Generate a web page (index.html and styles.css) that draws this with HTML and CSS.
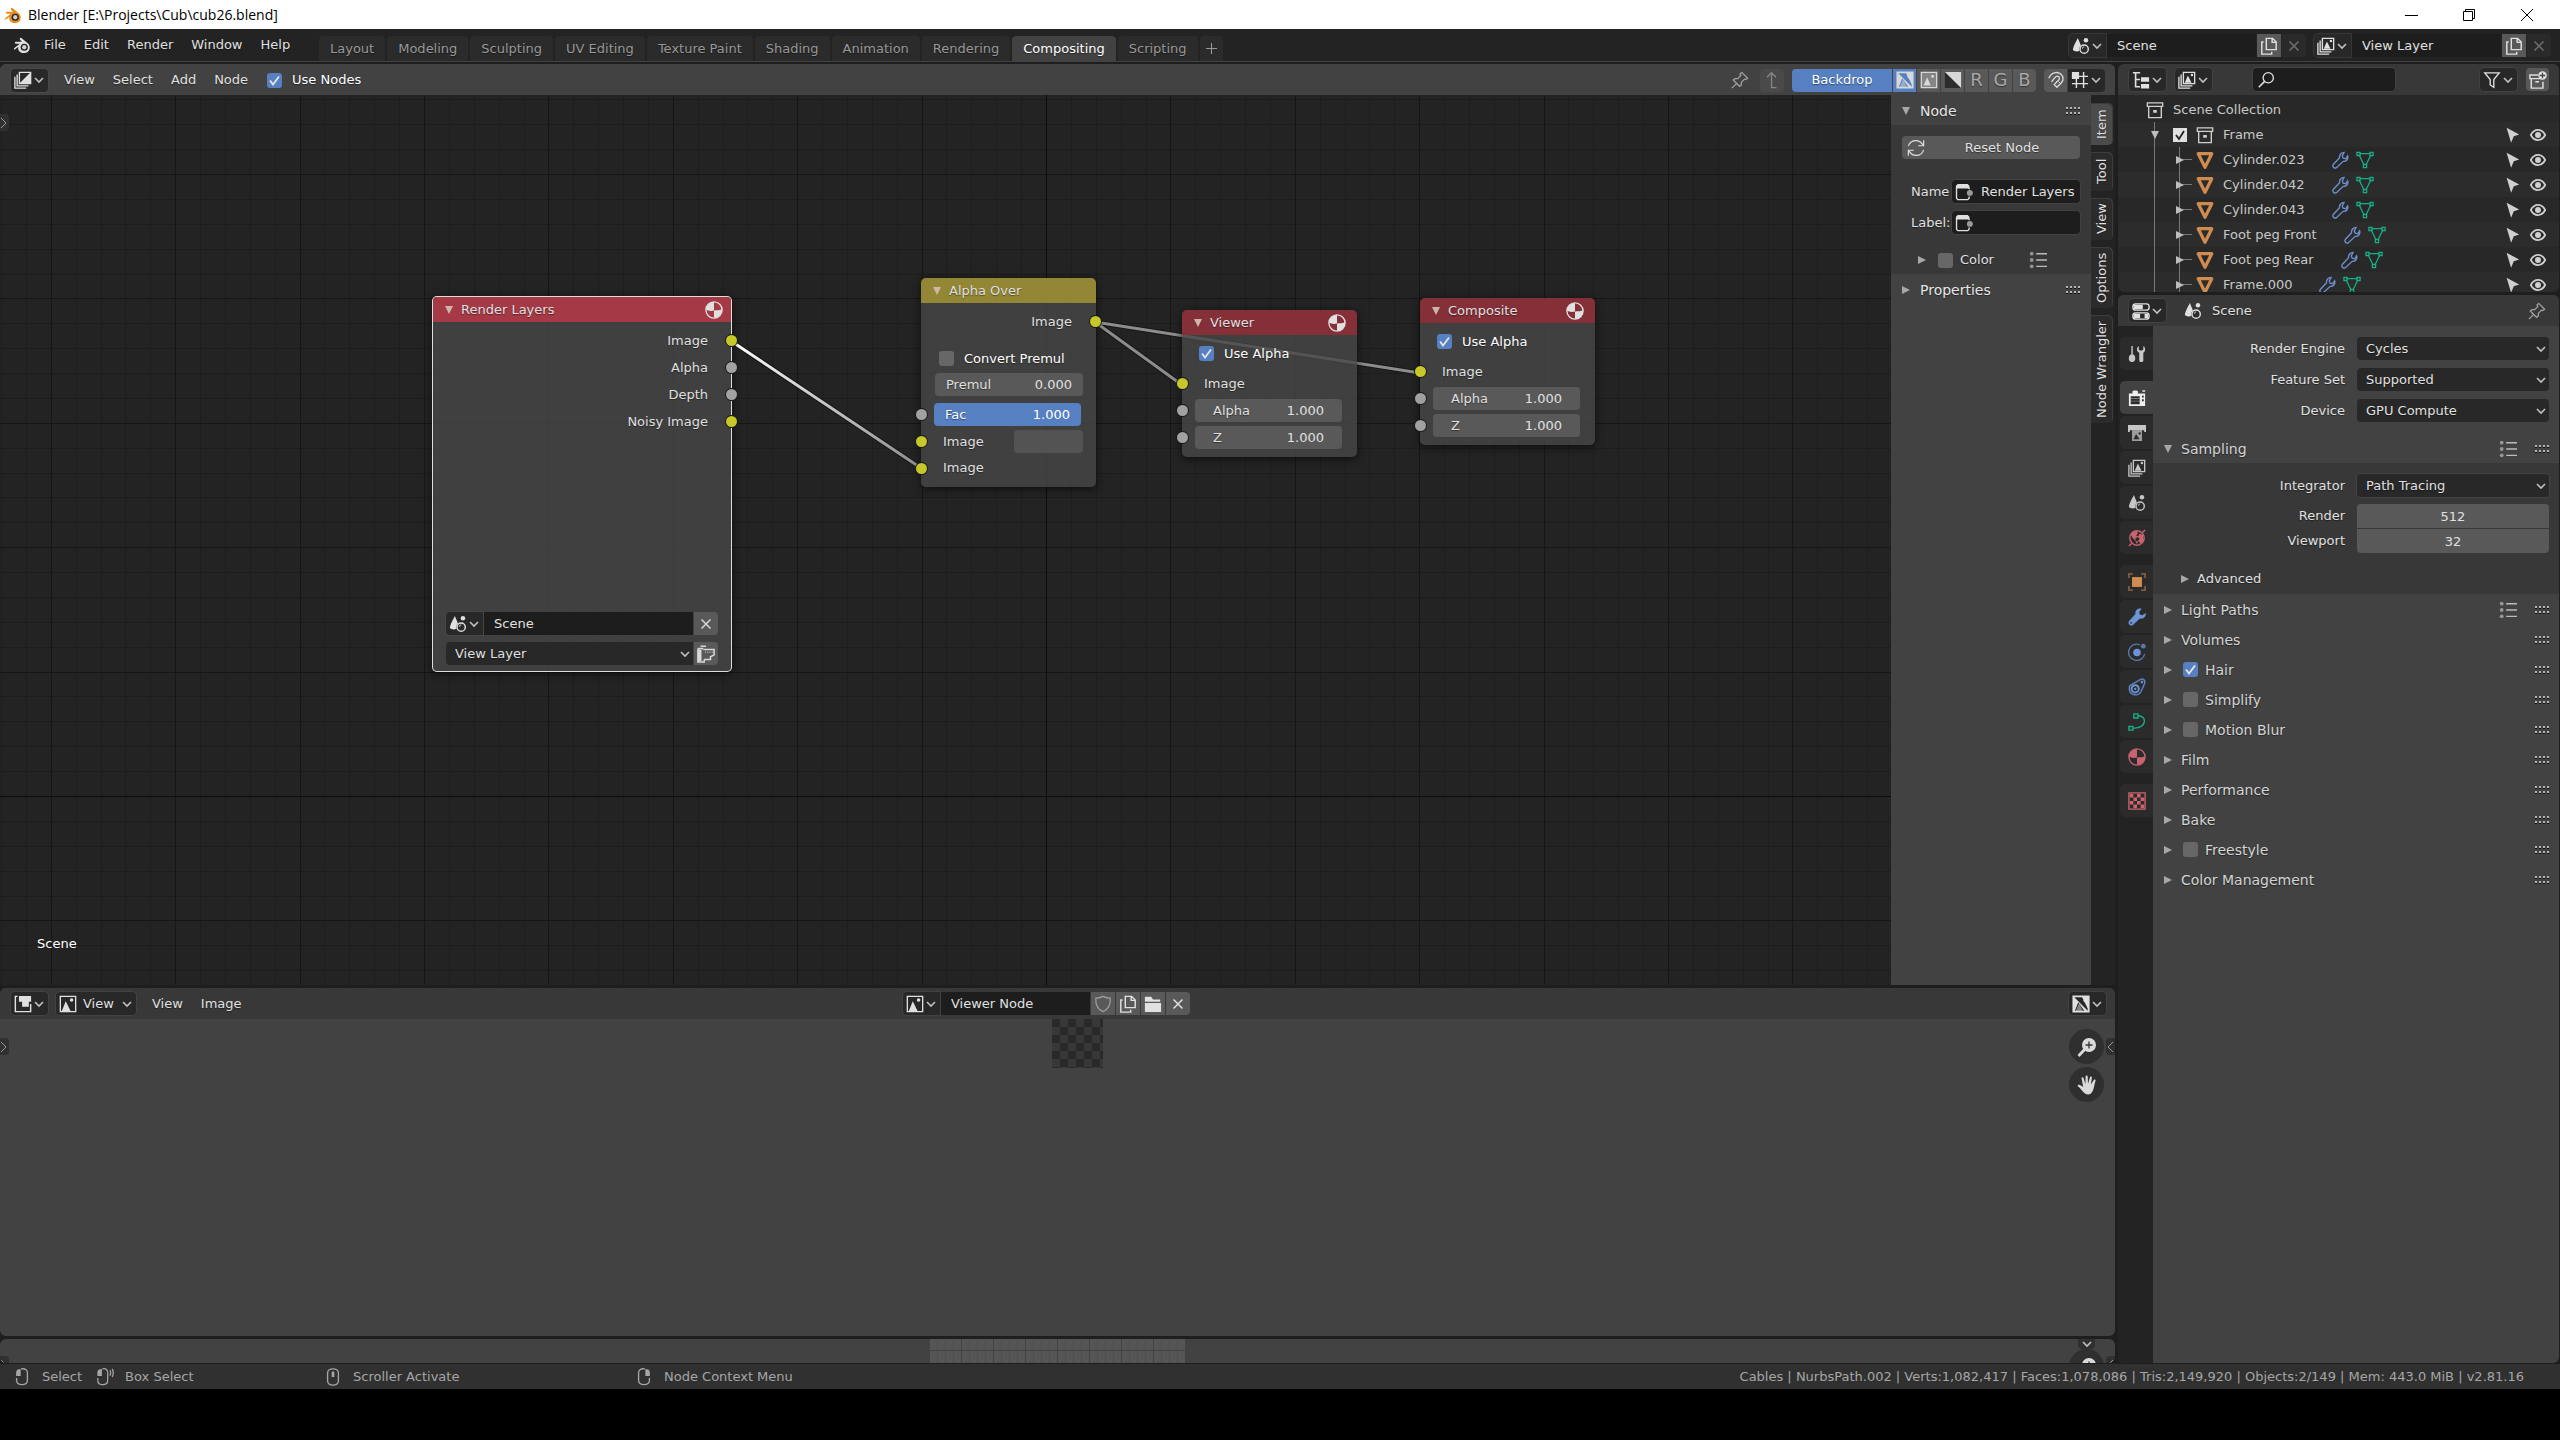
FILE: index.html
```html
<!DOCTYPE html>
<html lang="en">
<head>
<meta charset="utf-8">
<title>Blender [E:\Projects\Cub\cub26.blend]</title>
<link rel="stylesheet" href="styles.css">
</head>
<body>
<svg class="sprite" aria-hidden="true">
  <symbol id="chev" viewBox="0 0 10 10"><path d="M1 3l4 4 4-4" fill="none" stroke="currentColor" stroke-width="1.6"/></symbol>
  <symbol id="down" viewBox="0 0 10 10"><path d="M1 1h8L5 9z" fill="currentColor"/></symbol>
  <symbol id="right" viewBox="0 0 10 10"><path d="M1 1v8l8-4z" fill="currentColor"/></symbol>
  <symbol id="blender" viewBox="0 0 20 20"><path d="M9 2l8 6.500c3 3 2 10-4.500 10.500C7 19.200 5 15.500 6 12l-3.500 2.800c-1 .6-2-.4-1.300-1.200L7.500 8.500H3c-1.300 0-1.300-2 0-2h7L8 4.500C7 3 8 1.500 9 2z" fill="currentColor"/><circle cx="12.500" cy="12.500" r="4" class="hole"/><circle cx="12.500" cy="12.500" r="2.400" class="pupil"/></symbol>
  <symbol id="scene" viewBox="0 0 20 20"><path d="M6.500 1c2 5 4 9 4.500 12-2 3.500-8 4-10 1.500C1 11 4.500 5 6.500 1z" fill="currentColor"/><circle cx="15.500" cy="3.500" r="2.500" fill="currentColor"/><circle cx="13.500" cy="13.500" r="5.500" class="cut"/><circle cx="13.500" cy="13.500" r="4.600" fill="none" stroke="currentColor" stroke-width="1.600"/><path d="M11.500 13a2 2 0 0 1 2-2" fill="none" stroke="currentColor"/></symbol>
  <symbol id="layers" viewBox="0 0 20 20"><path d="M6 1.500h12.500v12.500H6zM3.500 4v12.500H16M1 6.500V19h12.500" fill="none" stroke="currentColor" stroke-width="1.500"/><path d="M7.500 13l3.500-8 4 8z" fill="currentColor"/><circle cx="15.500" cy="4.500" r="1.400" fill="currentColor"/></symbol>
  <symbol id="compositor" viewBox="0 0 20 20"><path d="M6 1.500h12.500v12.500H6zM3.500 4v12.500H16M1 6.500V19h12.500" fill="none" stroke="currentColor" stroke-width="1.500"/><path d="M6 14L18.500 1.500V14z" fill="currentColor"/></symbol>
  <symbol id="image" viewBox="0 0 20 20"><path d="M1.500 1.500h17v17h-17z" fill="none" stroke="currentColor" stroke-width="1.500"/><path d="M3 18l4.500-11L13 18z" fill="currentColor"/><circle cx="14" cy="5.500" r="2" fill="currentColor"/></symbol>
  <symbol id="imgalpha" viewBox="0 0 20 20"><path d="M1.500 1.500h17v17h-17z" fill="none" stroke="currentColor" stroke-width="2"/><path d="M2 2l16 16h-4L7 8 3 18H2zM11 2h8v16z" fill="currentColor"/><path d="M4 18l4-9 4 9z" fill="currentColor" opacity=".5"/><circle cx="14.500" cy="6" r="1.800" fill="currentColor"/></symbol>
  <symbol id="imgbox" viewBox="0 0 20 20"><path d="M1.500 1.500h17v17h-17z" fill="currentColor" opacity=".35"/><path d="M1.500 1.500h17v17h-17z" fill="none" stroke="currentColor" stroke-width="1.500"/><path d="M4 16l4-9 4 9z" fill="currentColor"/><circle cx="14" cy="6" r="1.600" fill="currentColor"/></symbol>
  <symbol id="diag" viewBox="0 0 20 20"><path d="M1 1h18v18H1z" class="dark"/><path d="M1 1h18v18z" fill="currentColor"/></symbol>
  <symbol id="magnet" viewBox="0 0 20 20"><path d="M2 8C5 1 11 1 14 2.500c5 3 4.500 8 2 10.500l-5 5-3-3 5-5c2-2 0-5-2.500-4S7 10 5 12" fill="none" stroke="currentColor" stroke-width="1.500"/><path d="M12.500 11.500l3 3" stroke="currentColor"/></symbol>
  <symbol id="grid" viewBox="0 0 20 20"><path d="M1 6h18M1 14h18M6 3v16M14 1v18" stroke="currentColor" stroke-width="1.600"/><path d="M1 1h8v8H1z" fill="currentColor"/></symbol>
  <symbol id="pin" viewBox="0 0 20 20"><path d="M12 1.500l6.500 6.500-2 1.500-1.500-.5-3.500 3.500v3l-2 1.500-7-7 2-1.500h3L11 5l-1-1.500zM6 14l-5 5" fill="none" stroke="currentColor" stroke-width="1.400"/></symbol>
  <symbol id="up" viewBox="0 0 20 20"><path d="M15 18.500H9.500V2M4.500 7l5-5 5 5" fill="none" stroke="currentColor" stroke-width="1.500"/></symbol>
  <symbol id="copy" viewBox="0 0 20 20"><path d="M7 1.500h7l4 4V14H7zM13.500 1.500V6H18M4 5.500H2V19h11v-2.500" fill="none" stroke="currentColor" stroke-width="1.600"/></symbol>
  <symbol id="x" viewBox="0 0 20 20"><path d="M5 5l10 10M15 5L5 15" stroke="currentColor" stroke-width="1.600"/></symbol>
  <symbol id="tree" viewBox="0 0 20 20"><path d="M1 2h8M4 2v15.500h5M4 9.500h5" fill="none" stroke="currentColor" stroke-width="1.800"/><path d="M10 7h9v5h-9zM10 14.500h9v5h-9z" fill="currentColor"/></symbol>
  <symbol id="search" viewBox="0 0 20 20"><circle cx="12.500" cy="7.500" r="5.700" fill="none" stroke="currentColor" stroke-width="1.500"/><path d="M8.500 11.500L2 18" stroke="currentColor" stroke-width="1.800"/></symbol>
  <symbol id="filter" viewBox="0 0 20 20"><path d="M2 2h16l-6 7.500V18l-4-2.500v-6z" fill="none" stroke="currentColor" stroke-width="1.500"/></symbol>
  <symbol id="newcoll" viewBox="0 0 20 20"><path d="M10 4.500H1v4h13M2.500 8.500V19h13v-7M7 12h4" fill="none" stroke="currentColor" stroke-width="1.600"/><circle cx="15" cy="5" r="4.700" fill="currentColor"/><path d="M15 2v6M12 5h6" stroke="#444" stroke-width="1.400"/></symbol>
  <symbol id="coll" viewBox="0 0 20 20"><path d="M1.500 2h17v4h-17zM3 6v12.500h14V6" fill="none" stroke="currentColor" stroke-width="1.500"/><path d="M8 10h4v3H8z" fill="currentColor"/></symbol>
  <symbol id="mesh" viewBox="0 0 20 20"><path d="M2.500 3h15L10 18z" fill="none" stroke="#cf8b50" stroke-width="3.600" stroke-linejoin="round"/></symbol>
  <symbol id="meshdata" viewBox="0 0 20 20"><path d="M4 3h12M3.500 4.500l5.500 11M16.500 4.500l-5.500 11" fill="none" stroke="#17b086" stroke-width="1.400"/><path d="M1 1.500h3.500V5H1zM15.500 1.500H19V5h-3.500zM8.200 15h3.600v3.600H8.200z" fill="none" stroke="#17b086" stroke-width="1.400"/></symbol>
  <symbol id="wrench" viewBox="0 0 20 20"><path d="M14.500 1.500l-2 4 1 2.500 3 .5 2-3c1 3.500-1.500 6.500-5 6l-7.500 7c-2 1.500-5-1-3.500-3.500l7-7.500C9 4.500 11.500 1.500 14.500 1.500z" fill="none" stroke="#6d8fcd" stroke-width="1.500"/></symbol>
  <symbol id="wrenchfill" viewBox="0 0 20 20"><path d="M15 .8l-2.600 3.900.8 2.600 2.600.8 3.900-2.600c.8 4-2.600 7.200-6.500 6.200L5.500 18.800c-2.800 2-6.500-1.500-4.300-4.300l7.100-7.700C7.300 3.200 10.800-.2 15 .8z" fill="#6b93d6"/><circle cx="3.500" cy="16.500" r="1" class="dark"/></symbol>
  <symbol id="cursor" viewBox="0 0 20 20"><path d="M4 2l14 7.500-6 2-3 7z" fill="currentColor"/></symbol>
  <symbol id="eye" viewBox="0 0 20 20"><path d="M2 10c4-7.500 12-7.500 16 0-4 7.500-12 7.500-16 0z" fill="none" stroke="currentColor" stroke-width="1.900"/><circle cx="10" cy="10" r="3.300" fill="currentColor"/></symbol>
  <symbol id="props" viewBox="0 0 20 20"><rect x="1" y="2" width="18" height="7" rx="3" fill="none" stroke="currentColor" stroke-width="1.500"/><path d="M2 3h10v5H2z" fill="currentColor"/><rect x="1" y="12" width="18" height="7" rx="3" fill="none" stroke="currentColor" stroke-width="1.500"/><path d="M2 13h7v5H2zM14 13h4v5h-4z" fill="currentColor"/></symbol>
  <symbol id="tool" viewBox="0 0 20 20"><path d="M4.500 1v10" stroke="currentColor" stroke-width="1.600"/><path d="M1.500 12l1.500-1.500h3L7.500 12c1.500 4 0 7-3 7s-4.500-3-3-7zM12 1v4l1.500 1h2L17 5V1c3 2 2.500 6 0 7.500v9c0 2-4.500 2-4.500 0v-9C9.500 7 9 3 12 1z" fill="currentColor"/></symbol>
  <symbol id="render" viewBox="0 0 20 20"><path d="M1 5h4V2.500C5 1.500 11 1.500 11 2.500V5h8v14H1z" fill="currentColor"/><path d="M3 8h10v9H3zM15.500 7.500h2v2h-2zM15.500 11.500h2v2h-2z" class="dark"/><path d="M3 10h10v1H3zM3 13h10v1H3z" fill="currentColor" opacity=".4"/><path d="M16 1.500h3V3h-3z" fill="currentColor"/></symbol>
  <symbol id="output" viewBox="0 0 20 20"><path d="M0 1h20v8h-2V7H2v2H0z" fill="currentColor"/><path d="M4.500 7h11v12h-11z" fill="currentColor" opacity=".75"/><path d="M6 17l3-6 4 6z" class="dark"/><circle cx="13" cy="10.500" r="1.300" class="dark"/></symbol>
  <symbol id="world" viewBox="0 0 20 20"><circle cx="10" cy="10" r="8" fill="none" stroke="#c9636d" stroke-width="1.600"/><path d="M1 19l3-3M16 4l3-3" stroke="#c9636d" stroke-width="1.600"/><path d="M4 4l6-2 1 3-2 2 3 2-4 1 1 3-3-2-3-5zM13 5l4 2v6l-3 3-3-3 2-2-2-2zM8 13l3 1-1 3z" fill="#c9636d"/></symbol>
  <symbol id="object" viewBox="0 0 20 20"><path d="M4.500 4.500h11v11h-11z" fill="#d18c52"/><path d="M1 5.500V1h4.500M14.500 1H19v4.500M19 14.500V19h-4.500M5.500 19H1v-4.500" fill="none" stroke="#a06a40" stroke-width="1.500"/></symbol>
  <symbol id="physics" viewBox="0 0 20 20"><circle cx="10" cy="10.500" r="4.200" fill="#6b93d6"/><path d="M13 2a9 9 0 1 0 5.500 10" fill="none" stroke="#5878ad" stroke-width="1.500"/><circle cx="17" cy="3.500" r="2.700" fill="#5878ad"/></symbol>
  <symbol id="constraint" viewBox="0 0 20 20"><path d="M2 8.500L14 1.500c3-1 5.500 1 4.500 4.500L14.500 15c-3 6-13 4.500-13-3 0-1.500 0-2.500.5-3.500z" fill="none" stroke="#5e84c2" stroke-width="1.600"/><circle cx="8" cy="12" r="4" fill="none" stroke="#6b93d6" stroke-width="2.200"/><circle cx="8" cy="12" r="1.300" fill="#6b93d6"/><circle cx="15.500" cy="4.500" r="1.500" fill="#6b93d6"/></symbol>
  <symbol id="curve" viewBox="0 0 20 20"><path d="M11 3c10 0 11 13-5 14" fill="none" stroke="#17b086" stroke-width="1.500"/><path d="M6.500 1H11v4.500H6.500zM1 15h4.500v4H1z" fill="none" stroke="#17b086" stroke-width="1.500"/></symbol>
  <symbol id="ball" viewBox="0 0 20 20"><circle cx="10" cy="10" r="9" fill="none" stroke="currentColor" stroke-width="1.500"/><path d="M10 1v9.500C7 11.500 3 11 1 9.500 1.500 5 5 1 10 1zM10 10.500c3.500 0 7 0 9-1.500 0 6-3.500 9.500-9 10z" fill="currentColor"/></symbol>
  <symbol id="texture" viewBox="0 0 20 20"><path d="M1 1h18v18H1z" fill="none" stroke="currentColor" stroke-width="1.500"/><path d="M2 2h4v4H2zM10 2h4v4h-4zM6 6h4v4H6zM14 6h4v4h-4zM2 10h4v4H2zM10 10h4v4h-4zM6 14h4v4H6zM14 14h4v4h-4z" fill="currentColor"/></symbol>
  <symbol id="list" viewBox="0 0 20 20"><path d="M8 3h12M8 10h12M8 17h12" stroke="currentColor" stroke-width="1.500"/><circle cx="3" cy="3" r="2.100" fill="currentColor" opacity=".7"/><circle cx="3" cy="10" r="2.100" fill="currentColor" opacity=".7"/><circle cx="3" cy="17" r="2.100" fill="currentColor" opacity=".7"/></symbol>
  <symbol id="grip" viewBox="0 0 14 8"><path d="M0 0h2v2H0zM4 0h2v2H4zM8 0h2v2H8zM12 0h2v2h-2zM0 5h2v2H0zM4 5h2v2H4zM8 5h2v2H8zM12 5h2v2h-2z" fill="#b5b5b5"/><path d="M0 2h2v1H0zM4 2h2v1H4zM8 2h2v1H8zM12 2h2v1h-2zM0 7h2v1H0zM4 7h2v1H4zM8 7h2v1H8zM12 7h2v1h-2z" fill="#111"/></symbol>
  <symbol id="refresh" viewBox="0 0 20 20"><path d="M1.500 8C4 0 14 0 17.500 6.500M18.500 12C16 20 6 20 2.500 13.500M18.500 1.500V7.500H12.500M1.500 18.500v-6h6" fill="none" stroke="currentColor" stroke-width="1.300"/></symbol>
  <symbol id="node" viewBox="0 0 20 20"><path d="M3 1h11l2 2v3H1V3z" fill="currentColor"/><path d="M1.700 5v12l1.500 1.500h11l1.500-1.500v-2M15.700 5v2" fill="none" stroke="currentColor" stroke-width="1.500"/><circle cx="16.500" cy="11" r="3.300" fill="#999"/></symbol>
  <symbol id="uvedit" viewBox="0 0 20 20"><path d="M4 1.500H1.500v17h17V10" fill="none" stroke="currentColor" stroke-width="1.600"/><path d="M5.500 1H19v6.500h-2.500V13H9V7.500H5.500z" fill="currentColor"/></symbol>
  <symbol id="shield" viewBox="0 0 20 20"><path d="M10 1.500c3 1.500 5 2 8 2C18.500 11 16 16 10 18.500 4 16 1.500 11 2 3.500c3 0 5-.5 8-2z" fill="none" stroke="currentColor" stroke-width="1.400"/></symbol>
  <symbol id="folder" viewBox="0 0 20 20"><path d="M1 2h7l2 3h8v2.500H1zM1 9h18v10H1z" fill="currentColor"/></symbol>
  <symbol id="renderlayer" viewBox="0 0 20 20"><path d="M1 4v15h7v-3M1 4h6M4 1.500h6M7 5h12v6l-4 2v3H8" fill="none" stroke="currentColor" stroke-width="1.700"/><path d="M1 5h4v13H1z" fill="currentColor"/><path d="M9 8h9" stroke="currentColor" stroke-dasharray="1 1"/></symbol>
  <symbol id="zoomin" viewBox="0 0 20 20"><circle cx="12" cy="8" r="7" fill="currentColor"/><path d="M8 12l-6.500 7" stroke="currentColor" stroke-width="2.800"/><path d="M12 4.500v7M8.500 8h7" stroke="#333" stroke-width="1.300"/></symbol>
  <symbol id="hand" viewBox="0 0 20 20"><path d="M8 18.500C5 16.500 3.500 13 .8 11.200c-.6-1.200 1-1.900 2.200-1.200L6.200 12 4.600 3.600c-.2-1.500 1.600-1.700 2-.3L8.400 9 8.600 1.500c.1-1.300 2-1.300 2.100 0l.3 7.300L13 2.200c.4-1.300 2-.9 1.900.4L13.900 9.600 16.800 5c.8-1 2.200-.2 1.700 1-1.500 4-1.200 9-4.500 12.500-1.500 1.300-4.500 1.200-6 0z" fill="currentColor"/></symbol>
  <symbol id="mouseL" viewBox="0 0 20 20"><path d="M9 1c5-1 7 2 7 4v9c0 6-12 6-12 0v-3" fill="none" stroke="currentColor" stroke-width="1.500"/><path d="M3.500 9V5c0-3 2-4 5-4v8z" fill="currentColor"/></symbol>
  <symbol id="mouseD" viewBox="0 0 20 20"><path d="M7 1c5-1 6 2 6 4v9c0 6-11 6-11 0v-3M15.500 2.500c1 2 1 4 0 6M18 1c1.500 3 1.500 6 0 9" fill="none" stroke="currentColor" stroke-width="1.400"/><path d="M1.500 9V5c0-3 2-4 5-4v8z" fill="currentColor"/></symbol>
  <symbol id="mouseM" viewBox="0 0 20 20"><path d="M4 5.500c0-6 12-6 12 0v9c0 6-12 6-12 0z" fill="none" stroke="currentColor" stroke-width="1.500"/><path d="M8.500 4h3v6h-3z" fill="currentColor"/></symbol>
  <symbol id="mouseR" viewBox="0 0 20 20"><path d="M11 1C6 0 4 3 4 5v9c0 6 12 6 12 0v-3" fill="none" stroke="currentColor" stroke-width="1.500"/><path d="M16.500 9V5c0-3-2-4-5-4v8z" fill="currentColor"/></symbol>
</svg>

<header class="titlebar">
  <svg class="ic logo"><use href="#blender"/></svg>
  <span class="caption">Blender [E:\Projects\Cub\cub26.blend]</span>
  <button class="win" aria-label="Minimize"><svg viewBox="0 0 16 16"><path d="M2 8.500h13"/></svg></button>
  <button class="win" aria-label="Restore"><svg viewBox="0 0 16 16"><path d="M2.500 4.500h9v9h-9zM4.500 4.500v-2h9v9h-2"/></svg></button>
  <button class="win" aria-label="Close"><svg viewBox="0 0 16 16"><path d="M2 2l12 12M14 2L2 14"/></svg></button>
</header>

<nav class="menubar">
  <button class="app" aria-label="Blender"><svg class="ic"><use href="#blender"/></svg></button>
  <div class="menus"><button>File</button><button>Edit</button><button>Render</button><button>Window</button><button>Help</button></div>
  <div class="workspaces">
    <button>Layout</button><button>Modeling</button><button>Sculpting</button><button>UV Editing</button><button>Texture Paint</button><button>Shading</button><button>Animation</button><button>Rendering</button><button class="on">Compositing</button><button>Scripting</button><button class="plus" aria-label="Add workspace"><svg viewBox="0 0 10 10"><path d="M5 0v10M0 5h10"/></svg></button>
  </div>
  <div class="ids">
    <div class="idbox"><button class="pick" aria-label="Browse scene"><svg class="ic"><use href="#scene"/></svg><svg class="ch"><use href="#chev"/></svg></button><input aria-label="Scene" value="Scene"><button class="sq" aria-label="New scene"><svg class="ic"><use href="#copy"/></svg></button><button class="sq off" aria-label="Delete scene"><svg class="ic"><use href="#x"/></svg></button></div>
    <div class="idbox"><button class="pick" aria-label="Browse view layer"><svg class="ic"><use href="#layers"/></svg><svg class="ch"><use href="#chev"/></svg></button><input aria-label="View layer" value="View Layer"><button class="sq" aria-label="New view layer"><svg class="ic"><use href="#copy"/></svg></button><button class="sq off" aria-label="Delete view layer"><svg class="ic"><use href="#x"/></svg></button></div>
  </div>
</nav>

<main>
  <div class="left">
    <section class="area nodes">
      <header class="bar light">
        <button class="pick" aria-label="Editor type"><svg class="ic"><use href="#compositor"/></svg><svg class="ch"><use href="#chev"/></svg></button>
        <div class="menus"><button>View</button><button>Select</button><button>Add</button><button>Node</button></div>
        <label class="check usenodes"><input type="checkbox" checked>Use Nodes</label>
        <div class="tools">
          <button class="bare dim" aria-label="Pin"><svg class="ic"><use href="#pin"/></svg></button>
          <button class="sq parent" aria-label="Parent"><svg class="ic"><use href="#up"/></svg></button>
          <div class="seg"><button class="backdrop">Backdrop</button><button class="sq blue" aria-label="Color and alpha"><svg class="ic"><use href="#imgalpha"/></svg></button><button class="sq" aria-label="Color"><svg class="ic"><use href="#imgbox"/></svg></button><button class="sq" aria-label="Alpha"><svg class="ic"><use href="#diag"/></svg></button><button class="sq chan">R</button><button class="sq chan">G</button><button class="sq chan">B</button></div>
          <div class="seg"><button class="sq" aria-label="Snap"><svg class="ic"><use href="#magnet"/></svg></button><button class="pick flat" aria-label="Snap to"><svg class="ic"><use href="#grid"/></svg><svg class="ch"><use href="#chev"/></svg></button></div>
        </div>
      </header>
      <div class="editor">
        <div class="canvas">
          <svg class="lines" id="lines"></svg>
          <svg class="links">
            <defs><linearGradient id="lg" gradientUnits="userSpaceOnUse" x1="731" y1="246" x2="921" y2="373"><stop offset="0" stop-color="#fff"/><stop offset="1" stop-color="#8c8c8c"/></linearGradient></defs>
            <g class="shade"><path d="M731 246L921 373M1095 227L1182 290M1095 227L1420 278"/></g>
            <path d="M731 246L921 373" stroke="url(#lg)"/><path class="grey" d="M1095 227L1182 290M1095 227L1420 278"/>
          </svg>

          <article class="node big" style="left:432px;top:201px">
            <h3 class="red hot"><svg class="tri"><use href="#down"/></svg>Render Layers<svg class="ic"><use href="#ball"/></svg></h3>
            <div class="sock out">Image<i class="y"></i></div>
            <div class="sock out">Alpha<i></i></div>
            <div class="sock out">Depth<i></i></div>
            <div class="sock out">Noisy Image<i class="y"></i></div>
            <div class="foot">
              <div class="seg"><button class="pick" aria-label="Browse scene"><svg class="ic"><use href="#scene"/></svg><svg class="ch"><use href="#chev"/></svg></button><input class="grow" aria-label="Node scene" value="Scene"><button class="sq" aria-label="Unlink"><svg class="ic"><use href="#x"/></svg></button></div>
              <div class="seg"><span class="drop grow"><select aria-label="Node view layer"><option>View Layer</option></select><svg class="ch"><use href="#chev"/></svg></span><button class="sq" aria-label="Render layer"><svg class="ic"><use href="#renderlayer"/></svg></button></div>
            </div>
          </article>

          <article class="node" style="left:921px;top:183px">
            <h3 class="olive"><svg class="tri"><use href="#down"/></svg>Alpha Over</h3>
            <div class="sock out first">Image<i class="y"></i></div>
            <div class="inner tall"><label class="check"><input type="checkbox">Convert Premul</label></div>
            <label class="num">Premul<input value="0.000"></label>
            <div class="sock in fac"><label class="num blue">Fac<input value="1.000"></label><i></i></div>
            <div class="sock in">Image<button class="swatch" aria-label="Image color"></button><i class="y"></i></div>
            <div class="sock in last">Image<i class="y"></i></div>
          </article>

          <article class="node" style="left:1182px;top:215px">
            <h3 class="red"><svg class="tri"><use href="#down"/></svg>Viewer<svg class="ic"><use href="#ball"/></svg></h3>
            <div class="inner"><label class="check"><input type="checkbox" checked>Use Alpha</label></div>
            <div class="sock in img">Image<i class="y"></i></div>
            <div class="sock in"><label class="num wide">Alpha<input value="1.000"></label><i></i></div>
            <div class="sock in end"><label class="num wide">Z<input value="1.000"></label><i></i></div>
          </article>

          <article class="node" style="left:1420px;top:203px">
            <h3 class="red"><svg class="tri"><use href="#down"/></svg>Composite<svg class="ic"><use href="#ball"/></svg></h3>
            <div class="inner"><label class="check"><input type="checkbox" checked>Use Alpha</label></div>
            <div class="sock in img">Image<i class="y"></i></div>
            <div class="sock in"><label class="num wide">Alpha<input value="1.000"></label><i></i></div>
            <div class="sock in end"><label class="num wide">Z<input value="1.000"></label><i></i></div>
          </article>

          <button class="edge l" aria-label="Show toolbar"><svg viewBox="0 0 8 16"><path d="M1 3l5 5-5 5"/></svg></button>
          <span class="scenename">Scene</span>
        </div>
        <aside class="sidebar">
          <button class="panel"><svg class="tri"><use href="#down"/></svg>Node<svg class="grip"><use href="#grip"/></svg></button>
          <div class="nodebody">
            <button class="reset"><svg class="ic"><use href="#refresh"/></svg><span>Reset Node</span></button>
            <label class="field name"><span>Name</span><span class="box"><svg class="ic"><use href="#node"/></svg><input value="Render Layers"></span></label>
            <label class="field"><span>Label:</span><span class="box"><svg class="ic"><use href="#node"/></svg><input value=""></span></label>
            <div class="colorrow"><svg class="tri"><use href="#right"/></svg><label class="check"><input type="checkbox">Color</label><svg class="ic"><use href="#list"/></svg></div>
          </div>
          <button class="panel"><svg class="tri"><use href="#right"/></svg>Properties<svg class="grip"><use href="#grip"/></svg></button>
        </aside>
        <nav class="vtabs"><button class="on">Item</button><button>Tool</button><button>View</button><button>Options</button><button>Node Wrangler</button></nav>
      </div>
    </section>

    <section class="area imged">
      <header class="bar">
        <div class="lead">
          <button class="pick" aria-label="Editor type"><svg class="ic"><use href="#uvedit"/></svg><svg class="ch"><use href="#chev"/></svg></button>
          <button class="pick mode"><svg class="ic"><use href="#image"/></svg>View<svg class="ch"><use href="#chev"/></svg></button>
          <div class="menus"><button>View</button><button>Image</button></div>
        </div>
        <div class="idbox"><button class="pick" aria-label="Browse image"><svg class="ic"><use href="#image"/></svg><svg class="ch"><use href="#chev"/></svg></button><input aria-label="Image" value="Viewer Node"><button class="sq dim" aria-label="Fake user"><svg class="ic"><use href="#shield"/></svg></button><button class="sq" aria-label="New image"><svg class="ic"><use href="#copy"/></svg></button><button class="sq" aria-label="Open image"><svg class="ic"><use href="#folder"/></svg></button><button class="sq" aria-label="Unlink image"><svg class="ic"><use href="#x"/></svg></button></div>
        <button class="pick last" aria-label="Display channels"><svg class="ic"><use href="#imgalpha"/></svg><svg class="ch"><use href="#chev"/></svg></button>
      </header>
      <div class="view">
        <div class="checker"></div>
        <div class="gizmos"><button aria-label="Zoom"><svg class="ic"><use href="#zoomin"/></svg></button><button aria-label="Pan"><svg class="ic"><use href="#hand"/></svg></button></div>
        <button class="edge l" aria-label="Show toolbar"><svg viewBox="0 0 8 16"><path d="M1 3l5 5-5 5"/></svg></button>
        <button class="edge r" aria-label="Show sidebar"><svg viewBox="0 0 8 16"><path d="M7 3L2 8l5 5"/></svg></button>
      </div>
    </section>

    <section class="area strip">
      <div class="uvgrid"></div>
      <div class="stripend"><button class="fold" aria-label="Show header"><svg class="ch"><use href="#chev"/></svg></button><button class="giz" aria-label="Zoom"><svg class="ic"><use href="#zoomin"/></svg></button></div>
      <button class="edge l" aria-label="Show toolbar"><svg viewBox="0 0 8 16"><path d="M1 3l5 5-5 5"/></svg></button>
      <button class="edge r" aria-label="Show sidebar"><svg viewBox="0 0 8 16"><path d="M7 3L2 8l5 5"/></svg></button>
    </section>
  </div>

  <div class="right">
    <section class="area outliner">
      <header class="bar">
        <button class="pick" aria-label="Editor type"><svg class="ic"><use href="#tree"/></svg><svg class="ch"><use href="#chev"/></svg></button>
        <button class="pick" aria-label="Display mode"><svg class="ic"><use href="#layers"/></svg><svg class="ch"><use href="#chev"/></svg></button>
        <label class="search"><svg class="ic"><use href="#search"/></svg><input aria-label="Search"></label>
        <button class="pick" aria-label="Filter"><svg class="ic"><use href="#filter"/></svg><svg class="ch"><use href="#chev"/></svg></button>
        <button class="sq newc" aria-label="New collection"><svg class="ic"><use href="#newcoll"/></svg></button>
      </header>
      <ul class="rows">
        <li><span class="g"><svg class="ic"><use href="#coll"/></svg></span><span class="nm root">Scene Collection</span></li>
        <li><span class="g v"><svg class="tri"><use href="#down"/></svg></span><span class="g"><input class="tick" type="checkbox" checked aria-label="Frame"></span><svg class="ic"><use href="#coll"/></svg><span class="nm">Frame</span><span class="tog"><svg class="ic"><use href="#cursor"/></svg><svg class="ic"><use href="#eye"/></svg></span></li>
        <li><span class="g v"></span><span class="g v h"><svg class="tri"><use href="#right"/></svg></span><svg class="ic"><use href="#mesh"/></svg><span class="nm">Cylinder.023</span><svg class="ic w"><use href="#wrench"/></svg><svg class="ic"><use href="#meshdata"/></svg><span class="tog"><svg class="ic"><use href="#cursor"/></svg><svg class="ic"><use href="#eye"/></svg></span></li>
        <li><span class="g v"></span><span class="g v h"><svg class="tri"><use href="#right"/></svg></span><svg class="ic"><use href="#mesh"/></svg><span class="nm">Cylinder.042</span><svg class="ic w"><use href="#wrench"/></svg><svg class="ic"><use href="#meshdata"/></svg><span class="tog"><svg class="ic"><use href="#cursor"/></svg><svg class="ic"><use href="#eye"/></svg></span></li>
        <li><span class="g v"></span><span class="g v h"><svg class="tri"><use href="#right"/></svg></span><svg class="ic"><use href="#mesh"/></svg><span class="nm">Cylinder.043</span><svg class="ic w"><use href="#wrench"/></svg><svg class="ic"><use href="#meshdata"/></svg><span class="tog"><svg class="ic"><use href="#cursor"/></svg><svg class="ic"><use href="#eye"/></svg></span></li>
        <li><span class="g v"></span><span class="g v h"><svg class="tri"><use href="#right"/></svg></span><svg class="ic"><use href="#mesh"/></svg><span class="nm">Foot peg Front</span><svg class="ic w"><use href="#wrench"/></svg><svg class="ic"><use href="#meshdata"/></svg><span class="tog"><svg class="ic"><use href="#cursor"/></svg><svg class="ic"><use href="#eye"/></svg></span></li>
        <li><span class="g v"></span><span class="g v h"><svg class="tri"><use href="#right"/></svg></span><svg class="ic"><use href="#mesh"/></svg><span class="nm">Foot peg Rear</span><svg class="ic w"><use href="#wrench"/></svg><svg class="ic"><use href="#meshdata"/></svg><span class="tog"><svg class="ic"><use href="#cursor"/></svg><svg class="ic"><use href="#eye"/></svg></span></li>
        <li><span class="g v"></span><span class="g v h"><svg class="tri"><use href="#right"/></svg></span><svg class="ic"><use href="#mesh"/></svg><span class="nm">Frame.000</span><svg class="ic w"><use href="#wrench"/></svg><svg class="ic"><use href="#meshdata"/></svg><span class="tog"><svg class="ic"><use href="#cursor"/></svg><svg class="ic"><use href="#eye"/></svg></span></li>
      </ul>
    </section>

    <section class="area props">
      <header class="bar">
        <button class="pick" aria-label="Editor type"><svg class="ic"><use href="#props"/></svg><svg class="ch"><use href="#chev"/></svg></button>
        <span class="crumb"><svg class="ic"><use href="#scene"/></svg>Scene</span>
        <button class="bare dim" aria-label="Pin"><svg class="ic"><use href="#pin"/></svg></button>
      </header>
      <div class="split">
        <nav class="ptabs">
          <button aria-label="Tool"><svg class="ic"><use href="#tool"/></svg></button>
          <button class="gap on" aria-label="Render"><svg class="ic"><use href="#render"/></svg></button>
          <button aria-label="Output"><svg class="ic"><use href="#output"/></svg></button>
          <button aria-label="View Layer"><svg class="ic"><use href="#layers"/></svg></button>
          <button aria-label="Scene"><svg class="ic"><use href="#scene"/></svg></button>
          <button aria-label="World"><svg class="ic"><use href="#world"/></svg></button>
          <button class="gap" aria-label="Object"><svg class="ic"><use href="#object"/></svg></button>
          <button aria-label="Modifiers"><svg class="ic"><use href="#wrenchfill"/></svg></button>
          <button aria-label="Physics"><svg class="ic"><use href="#physics"/></svg></button>
          <button aria-label="Constraints"><svg class="ic"><use href="#constraint"/></svg></button>
          <button aria-label="Data"><svg class="ic"><use href="#curve"/></svg></button>
          <button class="pink" aria-label="Material"><svg class="ic"><use href="#ball"/></svg></button>
          <button class="gap pink" aria-label="Texture"><svg class="ic"><use href="#texture"/></svg></button>
        </nav>
        <div class="content">
          <div class="engine">
            <label class="prop"><span>Render Engine</span><span class="drop"><select><option>Cycles</option></select><svg class="ch"><use href="#chev"/></svg></span></label>
            <label class="prop"><span>Feature Set</span><span class="drop"><select><option>Supported</option></select><svg class="ch"><use href="#chev"/></svg></span></label>
            <label class="prop"><span>Device</span><span class="drop"><select><option>GPU Compute</option></select><svg class="ch"><use href="#chev"/></svg></span></label>
          </div>
          <div class="panel"><svg class="tri"><use href="#down"/></svg>Sampling<svg class="ic"><use href="#list"/></svg><svg class="grip"><use href="#grip"/></svg></div>
          <div class="sampling">
            <label class="prop"><span>Integrator</span><span class="drop"><select><option>Path Tracing</option></select><svg class="ch"><use href="#chev"/></svg></span></label>
            <div class="pair"><label class="prop"><span>Render</span><input class="value" value="512"></label><label class="prop"><span>Viewport</span><input class="value" value="32"></label></div>
            <button class="sub"><svg class="tri"><use href="#right"/></svg>Advanced</button>
          </div>
          <div class="panel"><svg class="tri"><use href="#right"/></svg>Light Paths<svg class="ic"><use href="#list"/></svg><svg class="grip"><use href="#grip"/></svg></div>
          <div class="panel"><svg class="tri"><use href="#right"/></svg>Volumes<svg class="grip"><use href="#grip"/></svg></div>
          <div class="panel"><svg class="tri"><use href="#right"/></svg><label class="check"><input type="checkbox" checked>Hair</label><svg class="grip"><use href="#grip"/></svg></div>
          <div class="panel"><svg class="tri"><use href="#right"/></svg><label class="check"><input type="checkbox">Simplify</label><svg class="grip"><use href="#grip"/></svg></div>
          <div class="panel"><svg class="tri"><use href="#right"/></svg><label class="check"><input type="checkbox">Motion Blur</label><svg class="grip"><use href="#grip"/></svg></div>
          <div class="panel"><svg class="tri"><use href="#right"/></svg>Film<svg class="grip"><use href="#grip"/></svg></div>
          <div class="panel"><svg class="tri"><use href="#right"/></svg>Performance<svg class="grip"><use href="#grip"/></svg></div>
          <div class="panel"><svg class="tri"><use href="#right"/></svg>Bake<svg class="grip"><use href="#grip"/></svg></div>
          <div class="panel"><svg class="tri"><use href="#right"/></svg><label class="check"><input type="checkbox">Freestyle</label><svg class="grip"><use href="#grip"/></svg></div>
          <div class="panel"><svg class="tri"><use href="#right"/></svg>Color Management<svg class="grip"><use href="#grip"/></svg></div>
        </div>
      </div>
    </section>
  </div>
</main>

<footer class="status">
  <div class="hint"><svg class="ic"><use href="#mouseL"/></svg><span>Select</span><svg class="ic"><use href="#mouseD"/></svg><span>Box Select</span></div>
  <div class="hint"><svg class="ic"><use href="#mouseM"/></svg><span>Scroller Activate</span></div>
  <div class="hint"><svg class="ic"><use href="#mouseR"/></svg><span>Node Context Menu</span></div>
  <span class="stats">Cables | NurbsPath.002 | Verts:1,082,417 | Faces:1,078,086 | Tris:2,149,920 | Objects:2/149 | Mem: 443.0 MiB | v2.81.16</span>
</footer>
<script src="grid.js"></script>
</body>
</html>
```
FILE: grid.js
```js
// Background grid of the node canvas: a heavier line every fifth step, the darkest through the origin.
const svg = document.getElementById('lines');
const step = 24.88, origin = { x: 1046, y: 701 };

function draw() {
  const w = svg.clientWidth, h = svg.clientHeight;
  const d = { minor: '', major: '', axis: '' };
  const kind = k => k === 0 ? 'axis' : k % 5 === 0 ? 'major' : 'minor';
  for (let k = Math.ceil(-origin.x / step); origin.x + k * step < w; k++)
    d[kind(k)] += `M${Math.round(origin.x + k * step) + 0.5} 0V${h}`;
  for (let k = Math.ceil(-origin.y / step); origin.y + k * step < h; k++)
    d[kind(k)] += `M0 ${Math.round(origin.y + k * step) + 0.5}H${w}`;
  svg.innerHTML = Object.keys(d).map(c => `<path class="${c}" d="${d[c]}"/>`).join('');
}
draw();
addEventListener('resize', draw);
```
FILE: styles.css
```css
* { box-sizing: border-box; }
html, body { height: 100%; }
body {
  margin: 0;
  padding-bottom: 51px;
  display: flex;
  flex-direction: column;
  background: #000;
  color: #e0e0e0;
  font: 13px/16px "DejaVu Sans", sans-serif;
  overflow: hidden;
}
button, input, select {
  font: inherit;
  color: inherit;
  margin: 0;
  padding: 0;
  border: 0;
  background: none;
  border-radius: 0;
  outline: 0;
  min-width: 0;
}
button, select, .panel, label, h3, .sock, .crumb { text-shadow: 0 1px 1px rgba(0, 0, 0, .45); }
button { white-space: nowrap; }
svg { display: block; flex: none; }
.sprite { position: absolute; width: 0; height: 0; }
.ic { width: 18px; height: 18px; }
.ch { width: 10px; height: 10px; color: #c0c0c0; }
.tri { width: 10px; height: 10px; color: #a8a8a8; }
.grip { width: 14px; height: 8px; }
.dark, .cut { fill: #2c2c2c; }
.hole { fill: #232323; }
.pupil { fill: #d0d0d0; }

/* window title */
.titlebar { flex: none; height: 29px; display: flex; align-items: center; padding: 0 4px; background: #fff; color: #000; }
.titlebar .caption { flex: 1; margin-left: 6px; font: 14px/20px "Open Sans", "Noto Sans", sans-serif; }
.logo { color: #e98b1d; }
.win { width: 58px; height: 29px; display: grid; place-items: center; }
.win svg { width: 16px; height: 16px; fill: none; stroke: #000; }

/* top menu */
.menubar { flex: none; height: 33px; display: flex; align-items: flex-end; background: #232323; border-bottom: 1px solid #424242; }
.app { margin-left: 13px; height: 32px; }
.menus { display: flex; gap: 18px; }
.menubar .menus { margin-left: 13px; width: 275px; height: 32px; align-items: center; }
.workspaces { display: flex; gap: 2px; flex: 1; }
.workspaces button { height: 25px; padding: 0 11px; background: #2b2b2b; color: #989898; border-radius: 4px 4px 0 0; }
.workspaces .on { background: #424242; color: #fff; }
.workspaces .plus { padding: 0 6px; }
.plus svg { width: 11px; height: 11px; fill: none; stroke: #989898; }
.ids { display: flex; gap: 8px; margin: 0 9px 4px 0; }

/* shared controls */
.pick { height: 23px; display: flex; align-items: center; gap: 2px; padding: 0 4px 0 3px; background: #282828; border-radius: 4px; box-shadow: 0 0 0 1px rgba(80, 80, 80, .45); }
.sq { width: 24px; height: 23px; display: grid; place-items: center; background: #595959; }
.seg, .idbox { display: flex; height: 23px; gap: 1px; }
.seg > :first-child, .idbox > :first-child { border-radius: 4px 0 0 4px; }
.seg > :last-child, .idbox > :last-child { border-radius: 0 4px 4px 0; }
.idbox input, .seg input { background: #1d1d1d; padding: 0 10px; }
.idbox input { width: 149px; }
.idbox .off { background: #2a2a2a; color: #707070; }
.bare { width: 24px; height: 23px; display: grid; place-items: center; }
.dim { color: #a0a0a0; }
.blue { background: #5680c2; color: #fff; }
.grow { flex: 1; }
.check { display: flex; align-items: center; gap: 10px; }
.check input { appearance: none; width: 15px; height: 15px; border-radius: 3px; background: #676767; }
.check input:checked { background: #5680c2 url("data:image/svg+xml,%3Csvg xmlns='http://www.w3.org/2000/svg' viewBox='0 0 15 15'%3E%3Cpath d='M3 7.500l3 4 6-8' fill='none' stroke='%23e6e6e6' stroke-width='1.800'/%3E%3C/svg%3E"); }
.drop { display: grid; align-items: center; height: 23px; background: #282828; border-radius: 4px; }
.drop select { appearance: none; grid-area: 1 / 1; width: 100%; height: 23px; padding: 0 9px; }
.drop .ch { grid-area: 1 / 1; justify-self: end; margin-right: 3px; }

/* areas */
main { flex: 1; min-height: 0; display: flex; gap: 3px; padding: 2px 1px 1px 0; background: #1e1e1e; }
.left { flex: 1; min-width: 0; display: flex; flex-direction: column; gap: 3px; }
.right { flex: none; width: 441px; display: flex; flex-direction: column; gap: 3px; }
.area { position: relative; display: flex; flex-direction: column; min-height: 0; background: #424242; border-radius: 6px; overflow: hidden; }
.nodes { flex: 921 1 0; }
.imged { flex: 348 1 0; }
.strip { flex: none; height: 24px; flex-direction: row; }
.bar { flex: none; height: 31px; display: flex; align-items: center; padding: 0 11px; background: #383838; }
.bar.light { background: #424242; padding-top: 1px; padding-right: 10px; }
.bar .menus { margin-left: 16px; }
.usenodes { margin-left: 19px; color: #fff; }
.tools { margin-left: auto; display: flex; align-items: center; gap: 8px; }
.parent { background: #4a4a4a; color: #858585; border-radius: 4px; }
.backdrop { width: 100px; background: #5680c2; color: #fff; }
.seg .sq { color: #d8d8d8; }
.tools .seg .sq { width: 23px; }
.nodes .chan { font-size: 18px; color: #a8a8a8; }
.flat { box-shadow: none; }

/* node canvas */
.editor { flex: 1; min-height: 0; display: flex; background: #232323; }
.canvas { position: relative; flex: 1; overflow: hidden; }
.lines, .links { position: absolute; inset: 0; width: 100%; height: 100%; }
.lines path { fill: none; }
.minor { stroke: #1d1d1d; }
.major { stroke: #161616; }
.axis { stroke: #0c0c0c; }
.links path { fill: none; stroke-width: 3; }
.links .grey { stroke: #8c8c8c; }
.links .shade path { stroke: #161616; stroke-width: 5; }
.node { position: absolute; width: 175px; border-radius: 5px; background: rgba(71, 71, 71, .8); box-shadow: 0 2px 8px rgba(0, 0, 0, .6); padding-bottom: 6px; }
.node.big { width: 300px; height: 376px; padding: 0; display: flex; flex-direction: column; box-shadow: inset 0 0 0 1px #ddd, 0 2px 8px rgba(0, 0, 0, .6); }
.node h3 { margin: 0; height: 25px; display: flex; align-items: center; gap: 7px; padding: 0 11px; font-size: 13px; font-weight: 400; border-radius: 5px 5px 0 0; }
.node .tri { color: #cbb6a8; }
.big h3 { margin: 1px 1px 0; padding: 0 8px 0 11px; border-radius: 4px 4px 0 0; }
.node h3 .ic { margin-left: auto; }
.red { background: rgba(150, 43, 54, .8); }
.red.hot { background: rgba(190, 55, 70, .8); }
.olive { background: rgba(167, 151, 50, .8); }
.sock { position: relative; height: 27px; display: flex; align-items: center; }
.sock i { position: absolute; top: 8px; width: 11px; height: 11px; border-radius: 50%; background: #a1a1a1; box-shadow: 0 0 0 1px #1a1a1a; }
.sock i.y { background: #c7c729; }
.sock.out { justify-content: flex-end; padding-right: 24px; }
.sock.out i { right: -5px; }
.sock.in { padding-left: 22px; padding-right: 13px; }
.sock.in i { left: -5px; }
.big .out:nth-child(2) { margin-top: 5px; }
.first { margin-top: 5px; }
.img { margin-top: 7px; }
.foot { margin-top: auto; padding: 0 14px 7px; display: flex; flex-direction: column; gap: 7px; }
.foot .drop { border-radius: 4px 0 0 4px; }
.foot .grow { width: 0; }
.inner { height: 28px; padding: 11px 17px 0; }
.tall { height: 38px; padding: 16px 18px 0; }
.node .check { height: 15px; color: #fff; }
.num { display: flex; align-items: center; height: 23px; padding: 0 11px; background: #595959; border-radius: 4px; }
.num input { flex: 1; width: 0; text-align: right; }
.node > .num { margin: 0 13px 0 14px; }
.sock .num { flex: 1; }
.sock.in:has(.num) { padding: 0 15px 0 13px; }
.sock.fac { padding: 0 13px 0 14px; margin-top: 5px; }
.sock.last { height: 26px; }
.num.blue { background: #5680c2; }
.num.wide { padding: 0 18px; }
.swatch { margin-left: auto; width: 69px; height: 23px; background: #535353; border-radius: 4px; }
.scenename { position: absolute; left: 37px; bottom: 33px; color: #fff; }
.edge { position: absolute; top: 19px; width: 9px; height: 17px; background: #303030; }
.edge.l { left: 0; border-radius: 0 4px 4px 0; }
.edge.r { right: 0; border-radius: 4px 0 0 4px; }
.edge svg { width: 8px; height: 16px; fill: none; stroke: #999; }

/* sidebar */
.sidebar { flex: none; width: 200px; background: #424242; }
.panel { width: 100%; height: 30px; display: flex; align-items: center; gap: 9px; padding: 1px 11px 0 10px; font-size: 14px; color: #e6e6e6; }
.panel .grip { margin-left: auto; }
.nodebody { height: 149px; padding: 11px 11px 0; background: #383838; }
.reset { width: 100%; height: 23px; display: flex; align-items: center; padding: 0 5px; background: #595959; border-radius: 4px; }
.reset span { flex: 1; padding-left: 4px; }
.field { display: flex; align-items: center; height: 23px; padding-left: 9px; margin-top: 8px; }
.field > :first-child { width: 41px; }
.field.name { margin-top: 21px; }
.box { flex: 1; height: 23px; display: flex; align-items: center; gap: 8px; padding: 0 3px; background: #1d1d1d; border-radius: 4px; box-shadow: 0 0 0 1px #424242; white-space: nowrap; }
.box input { flex: 1; width: 0; }
.colorrow { display: flex; align-items: center; gap: 11px; height: 30px; margin-top: 11px; padding-left: 15px; }
.colorrow .check { gap: 7px; }
.colorrow .ic { margin-left: 24px; color: #bbb; }
.vtabs { flex: none; width: 24px; padding: 8px 2px 0 0; display: flex; flex-direction: column; gap: 7px; }
.vtabs button { writing-mode: vertical-rl; transform: rotate(180deg); width: 22px; height: 39px; background: #2b2b2b; border-radius: 5px 0 0 5px; box-shadow: inset 1px -1px 0 #3c3c3c; line-height: 22px; text-align: center; }
.vtabs button:nth-child(1) { height: 42px; }
.vtabs button:nth-child(3) { height: 42px; }
.vtabs button:nth-child(4) { height: 61px; }
.vtabs button:nth-child(5) { height: 108px; }
.vtabs .on { background: #4b4b4b; }

/* image editor */
.imged .bar { display: grid; grid-template-columns: 1fr auto 1fr; padding-right: 9px; }
.lead { display: flex; align-items: center; }
.mode { margin-left: 8px; width: 80px; gap: 6px; }
.mode .ch { margin-left: auto; }
.imged .idbox { margin-right: 24px; }
.imged .last { justify-self: end; }
.view { position: relative; flex: 1; display: flex; justify-content: center; }
.checker { width: 51px; height: 49px; margin-left: 40px; background: repeating-conic-gradient(#383838 0 25%, #292929 0 50%) 0 0 / 16px 16px; }
.gizmos { position: absolute; top: 10px; right: 11px; display: flex; flex-direction: column; gap: 3px; }
.gizmos button, .giz { width: 35px; height: 35px; display: grid; place-items: center; border-radius: 50%; background: #2f2f2f; color: #dadada; }
.gizmos .ic, .giz .ic { width: 20px; height: 20px; }
.uvgrid { width: 256px; margin: 0 auto; background: linear-gradient(#424242 0 0) 0 11px / 100% 1px no-repeat, repeating-linear-gradient(90deg, transparent 0 31px, #424242 31px 32px), repeating-linear-gradient(90deg, transparent 0 7px, #4e4e4e 7px 8px), #555; }
.stripend { position: absolute; top: 0; right: 11px; width: 35px; }
.fold { display: grid; place-items: center; width: 17px; height: 10px; margin: 0 auto; background: #303030; border-radius: 0 0 4px 4px; }
.strip .edge { top: 17px; }

/* outliner */
.outliner { flex: none; height: 228px; background: #282828; }
.outliner .bar { padding-right: 10px; gap: 9px; }
.search { width: 142px; height: 23px; margin: 0 auto 0 32px; display: flex; align-items: center; padding: 0 4px; background: #1d1d1d; border-radius: 4px; box-shadow: 0 0 0 1px #424242; }
.search input { flex: 1; width: 0; }
.newc { border-radius: 4px; width: 23px; }
.rows { list-style: none; margin: 2px 0 0; padding: 0; }
.rows li { height: 25px; display: flex; align-items: center; padding: 0 12px 0 24px; color: #c8c8c8; }
.rows li:nth-child(even) { background: #2c2c2c; }
.g { width: 25px; height: 25px; display: grid; place-items: center; }
.g.v { background: linear-gradient(#777 0 0) 12px 0 / 1px 100% no-repeat; }
.g.v.h { background: linear-gradient(#777 0 0) 12px 0 / 1px 100% no-repeat, linear-gradient(#777 0 0) 12px 12px / 13px 1px no-repeat; }
.rows .tri { color: #bdbdbd; }
.rows .ic { color: #cfcfcf; }
.rows .g + .ic { margin-left: 4px; }
.nm { margin-left: 9px; }
.nm.root { margin-left: 6px; }
.rows .w { margin: 0 7px 0 26px; }
.tog { margin-left: auto; display: flex; gap: 8px; }
.tick { appearance: none; width: 14px; height: 14px; background: #e0e0e0 url("data:image/svg+xml,%3Csvg xmlns='http://www.w3.org/2000/svg' viewBox='0 0 14 14'%3E%3Cpath d='M3 7l3 4 5-8' fill='none' stroke='%23222' stroke-width='1.800'/%3E%3C/svg%3E"); }

/* properties */
.props { flex: 1; }
.props .bar { padding-right: 10px; }
.crumb { flex: 1; display: flex; align-items: center; gap: 10px; margin-left: 18px; }
.split { flex: 1; display: flex; min-height: 0; }
.ptabs { flex: none; width: 35px; padding: 11px 0 0 2px; background: #232323; display: flex; flex-direction: column; gap: 2px; }
.ptabs button { height: 33px; display: grid; place-items: center; background: #2b2b2b; border-radius: 5px 0 0 5px; color: #c6c6c6; }
.ptabs .gap { margin-top: 9px; }
.ptabs .on { background: #424242; color: #eee; }
.ptabs .pink { color: #c9636d; }
.content { flex: 1; }
.engine { padding: 11px 10px 0 0; height: 107px; display: flex; flex-direction: column; gap: 8px; }
.prop { display: grid; grid-template-columns: 1fr 192px; column-gap: 12px; align-items: center; }
.prop > :first-child { text-align: right; }
.content .panel { padding-right: 10px; gap: 8px; color: #d4d4d4; }
.content .panel .check { margin-left: 2px; gap: 7px; }
.content .panel .ic { margin-left: auto; color: #bbb; }
.content .panel .ic + .grip { margin-left: 10px; }
.sampling { background: #383838; height: 131px; padding: 11px 10px 0 0; }
.sampling .drop { box-shadow: 0 0 0 1px #424242; }
.pair { margin-top: 7px; display: flex; flex-direction: column; gap: 1px; }
.value { height: 24px; background: #595959; text-align: center; border-radius: 4px 4px 0 0; }
.pair .prop + .prop .value { border-radius: 0 0 4px 4px; }
.sub { display: flex; align-items: center; gap: 7px; height: 30px; margin: 11px 0 0 27px; }

/* status bar */
.status { flex: none; height: 25px; display: flex; align-items: center; background: #303030; color: #a6a6a6; }
.hint { width: 311px; height: 25px; display: flex; align-items: center; padding-left: 13px; }
.hint span { margin: 0 14px 0 11px; }
.stats { margin-left: auto; margin-right: 36px; }

.logo { --hole: #fff; }
```
